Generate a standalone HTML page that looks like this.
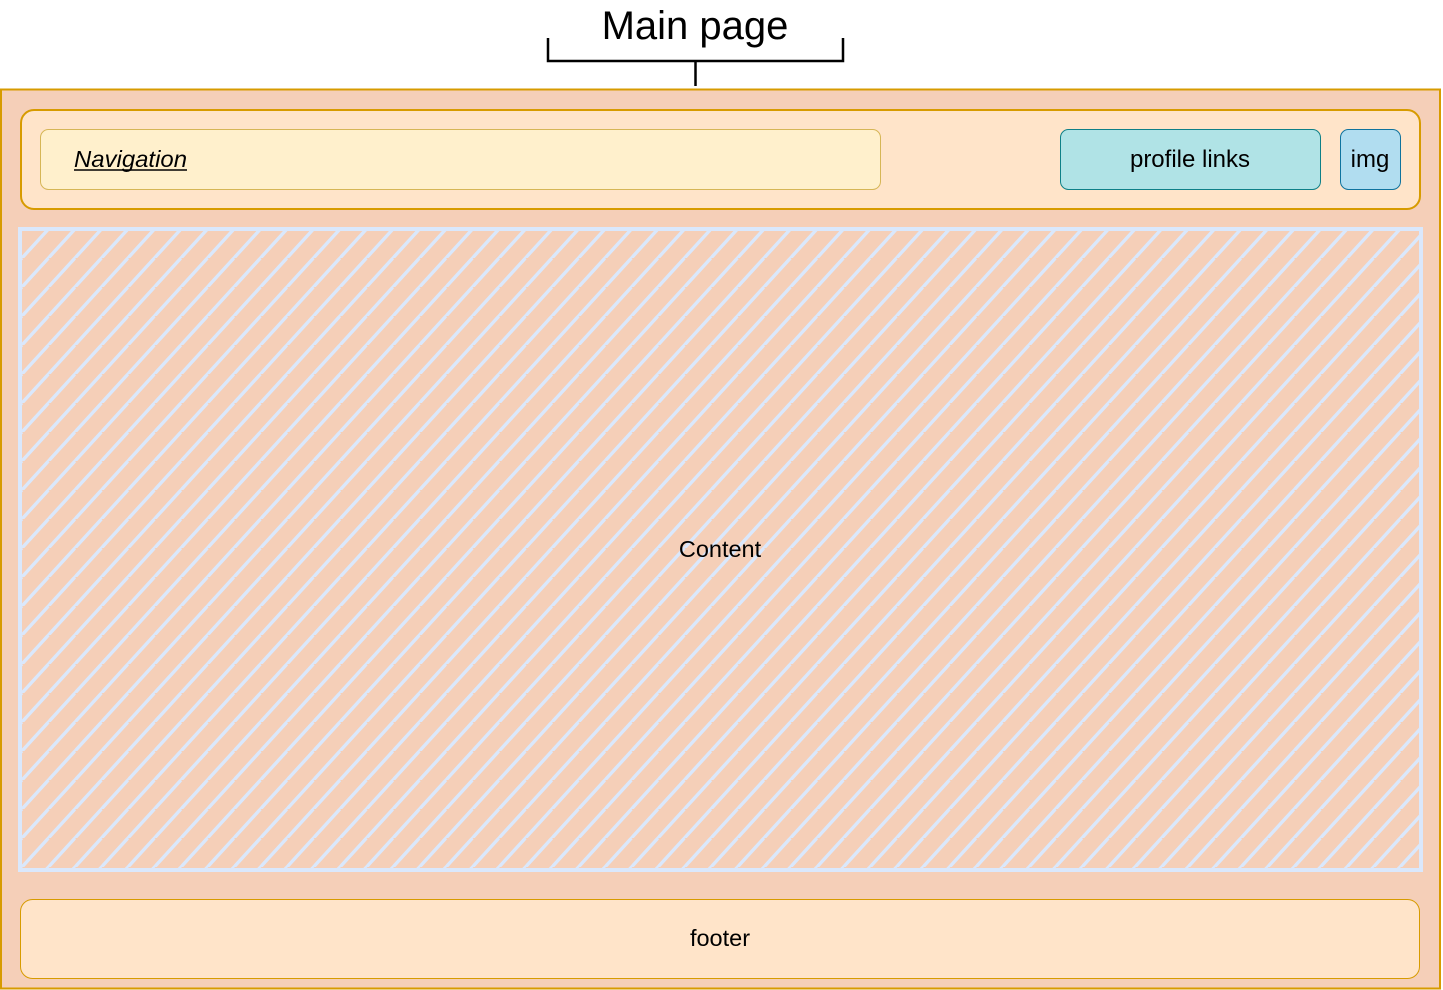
<!DOCTYPE html>
<html><head><meta charset="utf-8"><style>
html,body{margin:0;padding:0;background:#fff;width:1443px;height:990px;overflow:hidden}
svg text{font-family:"Liberation Sans",Arial,sans-serif}
</style></head><body>
<svg width="1443" height="990" xmlns="http://www.w3.org/2000/svg">
<defs>
<pattern id="h" patternUnits="userSpaceOnUse" width="26.5" height="29" x="22" y="229">
<line x1="-26.5" y1="58" x2="26.5" y2="0" stroke="#dae8fc" stroke-width="3.2"/>
<line x1="0" y1="58" x2="53" y2="0" stroke="#dae8fc" stroke-width="3.2"/>
<line x1="-53" y1="58" x2="0" y2="0" stroke="#dae8fc" stroke-width="3.2"/>
<line x1="0" y1="29" x2="26.5" y2="0" stroke="#dae8fc" stroke-width="3.2"/>
</pattern>
</defs>
<text x="695" y="39" font-size="40" text-anchor="middle" fill="#000">Main page</text>
<path d="M548 38V61H843V38M695.5 61V86" fill="none" stroke="#000" stroke-width="2.5"/>
<rect x="1" y="89.5" width="1439" height="899" fill="#f5cfb8" stroke="#d79b00" stroke-width="2"/>
<rect x="21" y="110" width="1399" height="99" rx="13" fill="#ffe4c9" stroke="#d79b00" stroke-width="2"/>
<rect x="40.5" y="129.5" width="840" height="60" rx="8" fill="#fff0cc" stroke="#d6b656" stroke-width="1"/>
<text x="74" y="167" font-size="23" font-style="italic" fill="#000" textLength="113" lengthAdjust="spacingAndGlyphs">Navigation</text>
<line x1="74" y1="170" x2="187" y2="170" stroke="#000" stroke-width="1.5"/>
<rect x="1060.5" y="129.5" width="260" height="60" rx="8" fill="#b0e3e6" stroke="#0e8088" stroke-width="1"/>
<text x="1190" y="167" font-size="24" text-anchor="middle" fill="#000">profile links</text>
<rect x="1340.5" y="129.5" width="60" height="60" rx="8" fill="#b1ddf0" stroke="#10739e" stroke-width="1"/>
<text x="1370" y="167" font-size="24" text-anchor="middle" fill="#000">img</text>
<rect x="20" y="229" width="1401" height="641" fill="url(#h)" stroke="#dae8fc" stroke-width="4"/>
<text x="720" y="557" font-size="23.5" text-anchor="middle" fill="#000">Content</text>
<rect x="20.5" y="899.5" width="1399" height="79" rx="12" fill="#ffe4c9" stroke="#d79b00" stroke-width="1"/>
<text x="720" y="946" font-size="23.5" text-anchor="middle" fill="#000">footer</text>
</svg>
</body></html>
